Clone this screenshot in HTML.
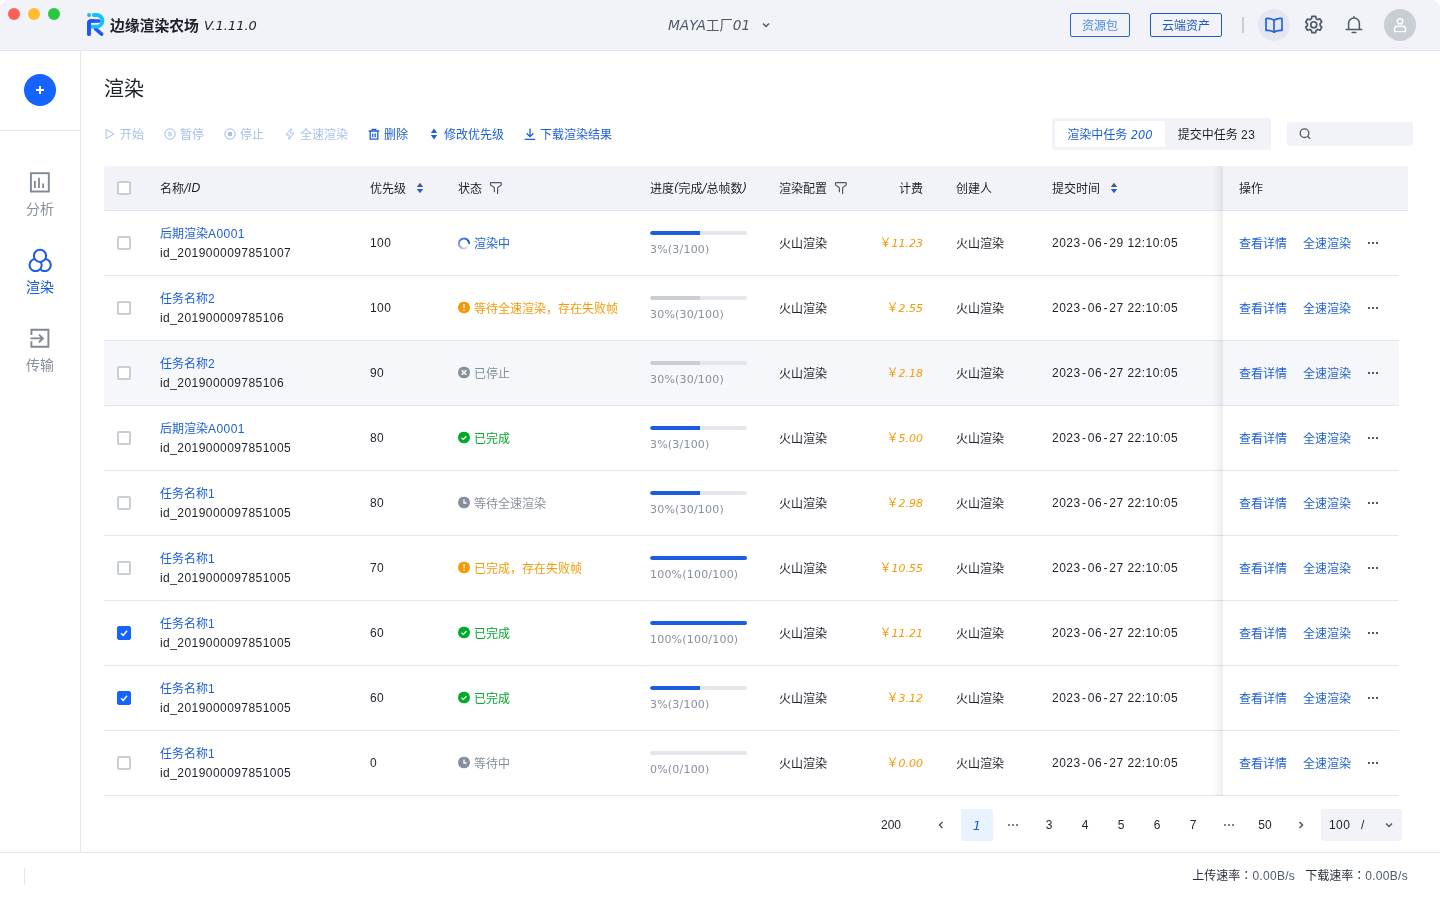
<!DOCTYPE html>
<html lang="zh-CN">
<head>
<meta charset="utf-8">
<title>边缘渲染农场</title>
<style>
*{box-sizing:border-box;margin:0;padding:0}
html,body{width:1440px;height:900px;overflow:hidden;background:#fff}
body{font-family:"Liberation Sans","Noto Sans CJK SC",sans-serif;font-size:12px;color:#1d2129;position:relative;-webkit-font-smoothing:antialiased}
.abs{position:absolute}
i,.it{font-family:"DejaVu Sans","Noto Sans CJK SC",sans-serif;font-style:italic}
svg{display:block}
/* window */
#win{will-change:transform;position:absolute;left:0;top:0;width:1440px;height:900px;border-radius:8px 8px 0 0;overflow:hidden;background:#fff}
/* header */
#hd{position:absolute;left:0;top:0;width:1440px;height:51px;background:#f2f3f8;border-bottom:1px solid #e5e6eb}
.tl{position:absolute;top:8px;width:12px;height:12px;border-radius:50%}
#logo{position:absolute;left:80px;top:5px}
#brand{position:absolute;left:110px;top:15px;height:22px;line-height:22px;font-size:14.800px;font-weight:700;color:#1d2129;white-space:nowrap}
#ver{position:absolute;left:204px;top:15px;height:22px;line-height:22px;font-size:13px;color:#1d2129;white-space:nowrap}
#proj{position:absolute;left:668px;top:14px;height:22px;line-height:22px;font-size:13px;color:#4e5969;white-space:nowrap}
.hbtn{position:absolute;top:13px;height:24px;line-height:24px;border:1px solid #2a66c8;border-radius:2px;text-align:center;font-size:12px}
/* sidebar */
#sb{position:absolute;left:0;top:51px;width:81px;height:801px;border-right:1px solid #e5e6eb;background:#fff}
#add{position:absolute;left:24px;top:23px;width:32px;height:32px;border-radius:50%;background:#1664ff}
#add:before{content:"";position:absolute;left:11.800px;top:14.800px;width:8.400px;height:2.400px;background:#fff}
#add:after{content:"";position:absolute;left:14.800px;top:11.800px;width:2.400px;height:8.400px;background:#fff}
#sbline{position:absolute;left:0;top:79px;width:80px;height:1px;background:#e5e6eb}
.nav{position:absolute;left:0;width:80px;text-align:center;font-size:14px;color:#86909c;line-height:20px}
.nav svg{margin:0 auto 5px}
.nav.on{color:#1b5be0}
/* footer */
#ft{position:absolute;left:0;top:852px;width:1440px;height:48px;border-top:1px solid #e5e6eb;background:#fff}
#ft .dv{position:absolute;left:24px;top:15px;width:1px;height:17px;background:#e5e6eb}
#ft .sp{position:absolute;right:32px;top:12px;line-height:20px;font-size:12px;color:#272e3b;white-space:nowrap}
/* content */
#title{position:absolute;left:104px;top:75px;font-size:20px;line-height:28px;color:#1d2129;font-weight:400}
.tb{position:absolute;top:125px;height:20px;line-height:20px;font-size:12px;color:#1d5fd6;white-space:nowrap;display:flex;align-items:center}
.tb svg{margin-right:4px;position:relative;top:-1px}
.tb.dis{opacity:.4}

.dj{font-family:"DejaVu Sans","Noto Sans CJK SC",sans-serif}
.cb{position:absolute;width:14px;height:14px;border:2px solid #c9cdd4;border-radius:2px;background:#fff}
.cb.on{background:#1664ff;border-color:#1664ff;border-width:1px}
.cb.on svg{left:2px!important;top:2px!important}
.th{position:absolute;top:165px;height:44px;display:flex;align-items:center;font-size:12px;color:#1d2129;white-space:nowrap}
.row{position:absolute;left:104px;width:1295px;height:65px;border-bottom:1px solid #e5e6eb}
.c{position:absolute;white-space:nowrap;line-height:20px;font-size:12px;color:#1d2129}
.c.m{top:22px;transform:translateY(.5px)}
.c.m.l,.c.m.dt,.c.m.fee{transform:none}
.c.nm{color:#1d5fd6}
.c.st{display:flex;align-items:center}
.c.st svg{margin-right:4px;position:relative;top:-1px}
.c.pt{font-family:"DejaVu Sans",sans-serif;color:#86909c;font-size:11px;letter-spacing:.2px}
.c.fee{text-align:right;color:#f59a07}
.pg{position:absolute;width:97px;height:4px;border-radius:2px;background:#e5e6eb;overflow:hidden}
.pg div{height:4px;border-radius:2px 0 0 2px}
.frow{position:absolute;left:1223px;width:176px;height:65px;border-bottom:1px solid #e5e6eb;color:#1d5fd6;font-size:12px;line-height:20px}
.frow span{position:absolute;transform:translateY(.5px);top:22px;white-space:nowrap}
.frow b{position:absolute;left:145px;top:31px;width:2px;height:2px;border-radius:50%;background:#1d2129;box-shadow:4px 0 0 #1d2129,8px 0 0 #1d2129}
.pi{position:absolute;top:809px;width:32px;height:32px;padding-bottom:1px;display:flex;align-items:center;justify-content:center;font-size:12px;color:#1d2129;border-radius:2px;white-space:nowrap}
.pi.on{background:#e8f3ff;color:#1d5fd6}
#win .th i{position:relative;top:1px;font-size:11.700px}

#win i{font-size:11px}
#hd i,#hd .it{font-size:13px}
.l{letter-spacing:.45px}
.dt{letter-spacing:.5px}
.dt s{text-decoration:none;margin:0 1.300px}
.c.id{letter-spacing:.44px}
.cj{font-family:"Noto Sans CJK JP",sans-serif}
.pi svg{position:relative;top:.500px}
#win .pi i{font-size:13px;position:relative;top:1px}
#ft .l{letter-spacing:.3px;color:#4e5969}
#win .tabi{font-size:11.500px}
#proj{font-size:13.400px}
#hd #proj i{font-size:13.750px}
</style>
</head>
<body>
<div id="win">
<!-- HEADER -->
<div id="hd">
  <div class="tl" style="left:8px;background:#fe5f57"></div>
  <div class="tl" style="left:28px;background:#febc2e"></div>
  <div class="tl" style="left:48px;background:#28c840"></div>
  <svg id="logo" width="40" height="40" viewBox="0 0 40 40"><circle cx="9.100" cy="10" r="2" fill="#1fb2f5"/><path d="M15.300 23.700L21.700 29.200" fill="none" stroke="#1f57f6" stroke-width="3.600" stroke-linecap="round"/><path d="M9 29.100V18a2 2 0 0 1 2-2h8" fill="none" stroke="#1f57f6" stroke-width="3.700" stroke-linecap="round"/><path d="M13.800 10H16.600a5.800 5.800 0 0 1 0 11.600H11" fill="none" stroke="#14c0f6" stroke-width="3.800" stroke-linecap="round"/><path d="M9 29.100V18a2 2 0 0 1 2-2h2" fill="none" stroke="#1f57f6" stroke-width="3.700" stroke-linecap="round"/></svg>
  <div id="brand">边缘渲染农场</div>
  <div id="ver" class="it">V.1.11.0</div>
  <div id="proj"><i>MAYA</i>工厂<i>01</i></div>
  <svg class="abs" style="left:761px;top:19.500px" width="10" height="10" viewBox="0 0 10 10"><path d="M2 3.500l3 3 3-3" fill="none" stroke="#4e5969" stroke-width="1.500"/></svg>
  <div class="hbtn" style="left:1070px;width:60px;color:#4d8be8">资源包</div>
  <div class="hbtn" style="left:1150px;width:72px;color:#1d5bbf;border-color:#1d5bbf">云端资产</div>
  <div class="abs" style="left:1242px;top:17px;width:2px;height:16px;background:#c9cdd4"></div>
  <div class="abs" style="left:1258px;top:9px;width:32px;height:32px;border-radius:50%;background:#e4e7ef"></div>
  <svg class="abs" style="left:1263px;top:14px" width="22" height="22" viewBox="0 0 22 22"><path d="M11 6.200C9 4.800 6 4.300 3 4.500v12c3-.2 6 .3 8 1.700 2-1.400 5-1.900 8-1.700v-12c-3-.2-6 .3-8 1.700zM11 6.200v12" fill="none" stroke="#2266d8" stroke-width="1.700" stroke-linejoin="round"/></svg>
  <svg class="abs" style="left:1303px;top:14px" width="21.500" height="21.500" viewBox="0 0 20 20"><circle cx="10" cy="10" r="2.800" fill="none" stroke="#4e5969" stroke-width="1.600"/><path d="M8.300 2.200h3.400l.5 2.100 1.500.9 2.100-.7 1.700 2.900-1.600 1.500v1.800l1.600 1.500-1.700 2.900-2.100-.7-1.500.9-.5 2.100H8.300l-.5-2.100-1.500-.9-2.100.7-1.700-2.900 1.600-1.500V9.100L2.500 7.600l1.700-2.900 2.100.7 1.500-.9z" fill="none" stroke="#4e5969" stroke-width="1.600" stroke-linejoin="round"/></svg>
  <svg class="abs" style="left:1344px;top:15px" width="20" height="20" viewBox="0 0 20 20"><path d="M4.600 14.400V8.300a5.400 5.400 0 0 1 10.800 0v6.100M2.200 14.400h15.600M8.200 17.500h3.600M10 1.800v1.200" fill="none" stroke="#4e5969" stroke-width="1.500" stroke-linecap="round"/></svg>
  <div class="abs" style="left:1384px;top:9px;width:32px;height:32px;border-radius:50%;background:#c9cdd4"></div>
  <svg class="abs" style="left:1392px;top:17px" width="16" height="16" viewBox="0 0 16 16"><circle cx="8" cy="4.300" r="2.700" fill="none" stroke="#fff" stroke-width="1.400"/><path d="M2.500 14.600v-2.300a3 3 0 0 1 3-3h5a3 3 0 0 1 3 3v2.300z" fill="none" stroke="#fff" stroke-width="1.400" stroke-linejoin="round"/></svg>
</div>
<!-- SIDEBAR -->
<div id="sb">
  <div id="add"></div>
  <div id="sbline"></div>
  <div class="nav" style="top:119px"><svg width="24" height="24" viewBox="0 0 24 24"><rect x="2.900" y="3.200" width="17.900" height="18.300" fill="none" stroke="#7f8894" stroke-width="1.900"/><path d="M6.900 18V10.700M11 18V7.800M15.100 18V13.600" stroke="#7f8894" stroke-width="1.800"/></svg>分析</div>
  <div class="nav on" style="top:197px"><svg width="24" height="24" viewBox="0 0 24 24"><g fill="#fff" stroke="#1b5be0" stroke-width="2"><circle cx="16.700" cy="17.100" r="6.100"/><circle cx="7.600" cy="17.100" r="6.100"/><circle cx="12" cy="7.800" r="6.100"/></g></svg>渲染</div>
  <div class="nav" style="top:275px"><svg width="24" height="24" viewBox="0 0 24 24"><path d="M3.400 9.100V3.800H20.400V20.800H3.400V15.300M2.400 12.400H14.500M10.900 8.600L14.900 12.400L10.900 16.200" fill="none" stroke="#7f8894" stroke-width="1.900"/></svg>传输</div>
</div>
<!-- FOOTER -->
<div id="ft"><div class="dv"></div><div class="sp">上传速率<span class="cj" lang="ja">：</span><span class="l">0.00B/s</span><span style="margin-left:10px"></span>下载速率<span class="cj" lang="ja">：</span><span class="l">0.00B/s</span></div></div>
<!-- CONTENT -->
<div id="title">渲染</div>
<!--TOOLBAR-->
<div class="tb dis" style="left:104px"><svg width="12" height="12" viewBox="0 0 12 12"><path d="M2 1.500v9l8-4.500z" fill="none" stroke="#1d5fd6" stroke-width="1"/></svg>开始</div><div class="tb dis" style="left:164px"><svg width="12" height="12" viewBox="0 0 12 12"><circle cx="6" cy="6" r="5.200" fill="none" stroke="#1d5fd6"/><path d="M4.100 3.600h3.800v4.800H4.100z" fill="#1d5fd6" opacity=".55"/></svg>暂停</div><div class="tb dis" style="left:224px"><svg width="12" height="12" viewBox="0 0 12 12"><circle cx="6" cy="6" r="5.200" fill="none" stroke="#1d5fd6"/><rect x="4" y="4" width="4" height="4" rx=".800" fill="#1d5fd6"/></svg>停止</div><div class="tb dis" style="left:284px"><svg width="12" height="12" viewBox="0 0 12 12"><path d="M7.200 .500L2 6.900h3.300L4.800 11.500l5.200-6.400H6.700z" fill="none" stroke="#1d5fd6" stroke-width="1" stroke-linejoin="round"/></svg>全速渲染</div><div class="tb" style="left:368px"><svg width="12" height="12" viewBox="0 0 12 12"><path d="M.700 3h10.600M4.200 2.700V1.300h3.600v1.400M2.200 3.300v7.900h7.600V3.300M4.800 5.400v3.800M7.200 5.400v3.800" fill="none" stroke="#1d5fd6" stroke-width="1.300"/></svg>删除</div><div class="tb" style="left:428px"><svg width="12" height="12" viewBox="0 0 12 12"><path d="M6 .600L9.200 5H2.800zM6 11.400L9.200 7H2.800z" fill="#1d5fd6"/></svg>修改优先级</div><div class="tb" style="left:524px"><svg width="12" height="12" viewBox="0 0 12 12"><path d="M6 .600v7.800M2.600 5.200L6 8.600l3.400-3.400M.800 11.300h10.400" fill="none" stroke="#1d5fd6" stroke-width="1.300"/></svg>下载渲染结果</div>
<!--/TOOLBAR-->
<!--TABS-->
<div class="abs" style="left:1052px;top:118px;width:219px;height:32px;background:#f2f3f8;border-radius:2px"></div>
<div class="abs" style="left:1055px;top:121px;width:110px;height:26px;background:#fff;border-radius:2px;line-height:28px;text-align:center;color:#1d5fd6;white-space:nowrap">渲染中任务 <i class="tabi">200</i></div>
<div class="abs" style="left:1165px;top:121px;width:103px;height:26px;line-height:28px;text-align:center;color:#1d2129;white-space:nowrap">提交中任务 <span class="l">23</span></div>
<div class="abs" style="left:1287px;top:122px;width:126px;height:24px;background:#f2f3f8;border-radius:2px"></div>
<svg class="abs" style="left:1298px;top:127px" width="14" height="14" viewBox="0 0 14 14"><circle cx="6.500" cy="6.200" r="4.300" fill="none" stroke="#4e5969" stroke-width="1.300"/><path d="M9.600 9.300l2.600 2.600" stroke="#4e5969" stroke-width="1.300"/></svg>
<!--/TABS-->
<!--TABLE-->
<div class="abs" style="left:104px;top:166px;width:1304px;height:45px;background:#f2f3f8;border-bottom:1px solid #e5e6eb"></div>
<div class="cb" style="left:117px;top:181px"></div>
<div class="th" style="left:160px">名称<i>/ID</i></div>
<div class="th" style="left:370px">优先级<svg width="8" height="12" viewBox="0 0 8 12" style="margin-left:10px;position:relative;top:1px"><path d="M4 .800L7.200 5H.800z" fill="#4e5969"/><path d="M4 11.200L7.200 7H.800z" fill="#1d5fd6"/></svg></div>
<div class="th" style="left:458px">状态<svg width="14" height="14" viewBox="0 0 14 14" style="margin-left:7px;position:relative;top:1px"><path d="M8.600 12.600V7.300Q8.600 6.500 9.400 6L11.600 4.600Q12.300 4.100 12.300 3.200V2.500Q12.300 1.700 11.500 1.700H2.300Q1.500 1.700 1.500 2.500V3.200Q1.500 4.100 2.200 4.600L4.600 6Q5.400 6.500 5.400 7.300V10.700" fill="none" stroke="#4e5969" stroke-width="1.200" stroke-linecap="round"/></svg></div>
<div class="th" style="left:650px">进度<i>(</i>完成<i>/</i>总帧数<i>)</i></div>
<div class="th" style="left:779px">渲染配置<svg width="14" height="14" viewBox="0 0 14 14" style="margin-left:7px;position:relative;top:1px"><path d="M8.600 12.600V7.300Q8.600 6.500 9.400 6L11.600 4.600Q12.300 4.100 12.300 3.200V2.500Q12.300 1.700 11.500 1.700H2.300Q1.500 1.700 1.500 2.500V3.200Q1.500 4.100 2.200 4.600L4.600 6Q5.400 6.500 5.400 7.300V10.700" fill="none" stroke="#4e5969" stroke-width="1.200" stroke-linecap="round"/></svg></div>
<div class="th" style="left:860px;width:63px;justify-content:flex-end">计费</div>
<div class="th" style="left:956px">创建人</div>
<div class="th" style="left:1052px">提交时间<svg width="8" height="12" viewBox="0 0 8 12" style="margin-left:10px;position:relative;top:1px"><path d="M4 .800L7.200 5H.800z" fill="#4e5969"/><path d="M4 11.200L7.200 7H.800z" fill="#1d5fd6"/></svg></div>
<div class="row" style="top:211px;background:transparent">
<div class="cb" style="left:13px;top:25px"></div>
<div class="c nm" style="left:56px;top:12px;transform:translateY(.7px)">后期渲染<span class="l">A0001</span></div><div class="c id" style="left:56px;top:32px;transform:translateY(.4px)">id_2019000097851007</div>
<div class="c m l" style="left:266px">100</div>
<div class="c m st" style="left:354px;color:#1d5fd6"><svg width="12" height="12" viewBox="0 0 12 12" style="position:relative;top:-.5px"><g fill="none" stroke="#1450d0" stroke-width="1.900"><path d="M11.05 6.18A5.05 5.05 0 0 0 10.62 3.95" stroke-opacity="1.00"/><path d="M10.67 4.07A5.05 5.05 0 0 0 9.39 2.26" stroke-opacity="0.97"/><path d="M9.49 2.35A5.05 5.05 0 0 0 7.58 1.20" stroke-opacity="0.93"/><path d="M7.70 1.25A5.05 5.05 0 0 0 5.50 0.98" stroke-opacity="0.89"/><path d="M5.63 0.96A5.05 5.05 0 0 0 3.50 1.61" stroke-opacity="0.83"/><path d="M3.62 1.55A5.05 5.05 0 0 0 1.94 3.00" stroke-opacity="0.77"/><path d="M2.02 2.90A5.05 5.05 0 0 0 1.07 4.91" stroke-opacity="0.70"/><path d="M1.10 4.78A5.05 5.05 0 0 0 1.05 7.00" stroke-opacity="0.62"/><path d="M1.03 6.87A5.05 5.05 0 0 0 1.88 8.92" stroke-opacity="0.54"/><path d="M1.81 8.81A5.05 5.05 0 0 0 3.42 10.34" stroke-opacity="0.46"/><path d="M3.31 10.27A5.05 5.05 0 0 0 5.40 11.01" stroke-opacity="0.37"/><path d="M5.27 11.00A5.05 5.05 0 0 0 7.49 10.83" stroke-opacity="0.27"/><path d="M7.36 10.86A5.05 5.05 0 0 0 9.32 9.81" stroke-opacity="0.18"/><path d="M9.22 9.89A5.05 5.05 0 0 0 10.58 8.13" stroke-opacity="0.07"/></g></svg>渲染中</div>
<div class="pg" style="left:546px;top:20px"><div style="width:50px;background:#1c5de2"></div></div><div class="c pt" style="left:546px;top:29px">3%(3/100)</div>
<div class="c m" style="left:675px">火山渲染</div>
<div class="c m fee" style="left:739px;width:80px">￥<i>11.23</i></div>
<div class="c m" style="left:852px">火山渲染</div>
<div class="c m dt" style="left:948px">2023<s>-</s>06<s>-</s>29 12:10:05</div>
</div>
<div class="row" style="top:276px;background:transparent">
<div class="cb" style="left:13px;top:25px"></div>
<div class="c nm" style="left:56px;top:12px;transform:translateY(.7px)">任务名称<span class="l">2</span></div><div class="c id" style="left:56px;top:32px;transform:translateY(.4px)">id_201900009785106</div>
<div class="c m l" style="left:266px">100</div>
<div class="c m st" style="left:354px;color:#f59a07"><svg width="12" height="12" viewBox="0 0 12 12"><circle cx="6" cy="6" r="6" fill="#f59a07"/><path d="M6 2.800v3.900" stroke="#fff" stroke-width="1.400"/><circle cx="6" cy="8.800" r=".8" fill="#fff"/></svg>等待全速渲染，存在失败帧</div>
<div class="pg" style="left:546px;top:20px"><div style="width:50px;background:#c9cdd4"></div></div><div class="c pt" style="left:546px;top:29px">30%(30/100)</div>
<div class="c m" style="left:675px">火山渲染</div>
<div class="c m fee" style="left:739px;width:80px">￥<i>2.55</i></div>
<div class="c m" style="left:852px">火山渲染</div>
<div class="c m dt" style="left:948px">2023<s>-</s>06<s>-</s>27 22:10:05</div>
</div>
<div class="row" style="top:341px;background:#f6f7fa">
<div class="cb" style="left:13px;top:25px"></div>
<div class="c nm" style="left:56px;top:12px;transform:translateY(.7px)">任务名称<span class="l">2</span></div><div class="c id" style="left:56px;top:32px;transform:translateY(.4px)">id_201900009785106</div>
<div class="c m l" style="left:266px">90</div>
<div class="c m st" style="left:354px;color:#86909c"><svg width="12" height="12" viewBox="0 0 12 12"><circle cx="6" cy="6" r="6" fill="#86909c"/><path d="M3.700 3.700l4.600 4.600M8.300 3.700L3.700 8.300" stroke="#fff" stroke-width="1.500"/></svg>已停止</div>
<div class="pg" style="left:546px;top:20px"><div style="width:50px;background:#c9cdd4"></div></div><div class="c pt" style="left:546px;top:29px">30%(30/100)</div>
<div class="c m" style="left:675px">火山渲染</div>
<div class="c m fee" style="left:739px;width:80px">￥<i>2.18</i></div>
<div class="c m" style="left:852px">火山渲染</div>
<div class="c m dt" style="left:948px">2023<s>-</s>06<s>-</s>27 22:10:05</div>
</div>
<div class="row" style="top:406px;background:transparent">
<div class="cb" style="left:13px;top:25px"></div>
<div class="c nm" style="left:56px;top:12px;transform:translateY(.7px)">后期渲染<span class="l">A0001</span></div><div class="c id" style="left:56px;top:32px;transform:translateY(.4px)">id_2019000097851005</div>
<div class="c m l" style="left:266px">80</div>
<div class="c m st" style="left:354px;color:#00aa2a"><svg width="12" height="12" viewBox="0 0 12 12"><circle cx="6" cy="6" r="6" fill="#00aa2a"/><path d="M3.600 6.200l1.700 1.700 3.100-3.200" fill="none" stroke="#fff" stroke-width="1.300"/></svg>已完成</div>
<div class="pg" style="left:546px;top:20px"><div style="width:50px;background:#1c5de2"></div></div><div class="c pt" style="left:546px;top:29px">3%(3/100)</div>
<div class="c m" style="left:675px">火山渲染</div>
<div class="c m fee" style="left:739px;width:80px">￥<i>5.00</i></div>
<div class="c m" style="left:852px">火山渲染</div>
<div class="c m dt" style="left:948px">2023<s>-</s>06<s>-</s>27 22:10:05</div>
</div>
<div class="row" style="top:471px;background:transparent">
<div class="cb" style="left:13px;top:25px"></div>
<div class="c nm" style="left:56px;top:12px;transform:translateY(.7px)">任务名称<span class="l">1</span></div><div class="c id" style="left:56px;top:32px;transform:translateY(.4px)">id_2019000097851005</div>
<div class="c m l" style="left:266px">80</div>
<div class="c m st" style="left:354px;color:#86909c"><svg width="12" height="12" viewBox="0 0 12 12"><circle cx="6" cy="6" r="6" fill="#86909c"/><path d="M6 3v3.500h2.500" fill="none" stroke="#fff" stroke-width="1.300"/></svg>等待全速渲染</div>
<div class="pg" style="left:546px;top:20px"><div style="width:50px;background:#1c5de2"></div></div><div class="c pt" style="left:546px;top:29px">30%(30/100)</div>
<div class="c m" style="left:675px">火山渲染</div>
<div class="c m fee" style="left:739px;width:80px">￥<i>2.98</i></div>
<div class="c m" style="left:852px">火山渲染</div>
<div class="c m dt" style="left:948px">2023<s>-</s>06<s>-</s>27 22:10:05</div>
</div>
<div class="row" style="top:536px;background:transparent">
<div class="cb" style="left:13px;top:25px"></div>
<div class="c nm" style="left:56px;top:12px;transform:translateY(.7px)">任务名称<span class="l">1</span></div><div class="c id" style="left:56px;top:32px;transform:translateY(.4px)">id_2019000097851005</div>
<div class="c m l" style="left:266px">70</div>
<div class="c m st" style="left:354px;color:#f59a07"><svg width="12" height="12" viewBox="0 0 12 12"><circle cx="6" cy="6" r="6" fill="#f59a07"/><path d="M6 2.800v3.900" stroke="#fff" stroke-width="1.400"/><circle cx="6" cy="8.800" r=".8" fill="#fff"/></svg>已完成，存在失败帧</div>
<div class="pg" style="left:546px;top:20px"><div style="width:97.0px;background:#1c5de2"></div></div><div class="c pt" style="left:546px;top:29px">100%(100/100)</div>
<div class="c m" style="left:675px">火山渲染</div>
<div class="c m fee" style="left:739px;width:80px">￥<i>10.55</i></div>
<div class="c m" style="left:852px">火山渲染</div>
<div class="c m dt" style="left:948px">2023<s>-</s>06<s>-</s>27 22:10:05</div>
</div>
<div class="row" style="top:601px;background:transparent">
<div class="cb on" style="left:13px;top:25px"><svg width="8" height="8" viewBox="0 0 8 8" style="position:absolute;left:2px;top:2px"><path d="M1 4.200l2.200 2.200L7 1.800" fill="none" stroke="#fff" stroke-width="1.500"/></svg></div>
<div class="c nm" style="left:56px;top:12px;transform:translateY(.7px)">任务名称<span class="l">1</span></div><div class="c id" style="left:56px;top:32px;transform:translateY(.4px)">id_2019000097851005</div>
<div class="c m l" style="left:266px">60</div>
<div class="c m st" style="left:354px;color:#00aa2a"><svg width="12" height="12" viewBox="0 0 12 12"><circle cx="6" cy="6" r="6" fill="#00aa2a"/><path d="M3.600 6.200l1.700 1.700 3.100-3.200" fill="none" stroke="#fff" stroke-width="1.300"/></svg>已完成</div>
<div class="pg" style="left:546px;top:20px"><div style="width:97.0px;background:#1c5de2"></div></div><div class="c pt" style="left:546px;top:29px">100%(100/100)</div>
<div class="c m" style="left:675px">火山渲染</div>
<div class="c m fee" style="left:739px;width:80px">￥<i>11.21</i></div>
<div class="c m" style="left:852px">火山渲染</div>
<div class="c m dt" style="left:948px">2023<s>-</s>06<s>-</s>27 22:10:05</div>
</div>
<div class="row" style="top:666px;background:transparent">
<div class="cb on" style="left:13px;top:25px"><svg width="8" height="8" viewBox="0 0 8 8" style="position:absolute;left:2px;top:2px"><path d="M1 4.200l2.200 2.200L7 1.800" fill="none" stroke="#fff" stroke-width="1.500"/></svg></div>
<div class="c nm" style="left:56px;top:12px;transform:translateY(.7px)">任务名称<span class="l">1</span></div><div class="c id" style="left:56px;top:32px;transform:translateY(.4px)">id_2019000097851005</div>
<div class="c m l" style="left:266px">60</div>
<div class="c m st" style="left:354px;color:#00aa2a"><svg width="12" height="12" viewBox="0 0 12 12"><circle cx="6" cy="6" r="6" fill="#00aa2a"/><path d="M3.600 6.200l1.700 1.700 3.100-3.200" fill="none" stroke="#fff" stroke-width="1.300"/></svg>已完成</div>
<div class="pg" style="left:546px;top:20px"><div style="width:50px;background:#1c5de2"></div></div><div class="c pt" style="left:546px;top:29px">3%(3/100)</div>
<div class="c m" style="left:675px">火山渲染</div>
<div class="c m fee" style="left:739px;width:80px">￥<i>3.12</i></div>
<div class="c m" style="left:852px">火山渲染</div>
<div class="c m dt" style="left:948px">2023<s>-</s>06<s>-</s>27 22:10:05</div>
</div>
<div class="row" style="top:731px;background:transparent">
<div class="cb" style="left:13px;top:25px"></div>
<div class="c nm" style="left:56px;top:12px;transform:translateY(.7px)">任务名称<span class="l">1</span></div><div class="c id" style="left:56px;top:32px;transform:translateY(.4px)">id_2019000097851005</div>
<div class="c m l" style="left:266px">0</div>
<div class="c m st" style="left:354px;color:#86909c"><svg width="12" height="12" viewBox="0 0 12 12"><circle cx="6" cy="6" r="6" fill="#86909c"/><path d="M6 3v3.500h2.500" fill="none" stroke="#fff" stroke-width="1.300"/></svg>等待中</div>
<div class="pg" style="left:546px;top:20px"><div style="width:0px;background:#1c5de2"></div></div><div class="c pt" style="left:546px;top:29px">0%(0/100)</div>
<div class="c m" style="left:675px">火山渲染</div>
<div class="c m fee" style="left:739px;width:80px">￥<i>0.00</i></div>
<div class="c m" style="left:852px">火山渲染</div>
<div class="c m dt" style="left:948px">2023<s>-</s>06<s>-</s>27 22:10:05</div>
</div>
<div class="abs" style="left:1211px;top:166px;width:12px;height:630px;background:linear-gradient(to right,rgba(0,0,0,0),rgba(0,0,0,.015) 35%,rgba(0,0,0,.065))"></div>
<div class="abs" style="left:1223px;top:166px;width:185px;height:630px;background:#fff"></div>
<div class="abs" style="left:1223px;top:166px;width:185px;height:45px;background:#f2f3f8;border-bottom:1px solid #e5e6eb"></div>
<div class="th" style="left:1239px">操作</div>
<div class="frow" style="top:211px;background:#fff"><span style="left:16px">查看详情</span><span style="left:80px">全速渲染</span><b></b></div>
<div class="frow" style="top:276px;background:#fff"><span style="left:16px">查看详情</span><span style="left:80px">全速渲染</span><b></b></div>
<div class="frow" style="top:341px;background:#f6f7fa"><span style="left:16px">查看详情</span><span style="left:80px">全速渲染</span><b></b></div>
<div class="frow" style="top:406px;background:#fff"><span style="left:16px">查看详情</span><span style="left:80px">全速渲染</span><b></b></div>
<div class="frow" style="top:471px;background:#fff"><span style="left:16px">查看详情</span><span style="left:80px">全速渲染</span><b></b></div>
<div class="frow" style="top:536px;background:#fff"><span style="left:16px">查看详情</span><span style="left:80px">全速渲染</span><b></b></div>
<div class="frow" style="top:601px;background:#fff"><span style="left:16px">查看详情</span><span style="left:80px">全速渲染</span><b></b></div>
<div class="frow" style="top:666px;background:#fff"><span style="left:16px">查看详情</span><span style="left:80px">全速渲染</span><b></b></div>
<div class="frow" style="top:731px;background:#fff"><span style="left:16px">查看详情</span><span style="left:80px">全速渲染</span><b></b></div>
<!--/TABLE-->
<!--PAGER-->
<div class="pi" style="left:870px;width:42px">200</div>
<div class="pi" style="left:925px"><svg width="10" height="10" viewBox="0 0 10 10"><path d="M6.500 2L3.500 5l3 3" fill="none" stroke="#4e5969" stroke-width="1.500"/></svg></div>
<div class="pi on" style="left:961px"><i>1</i></div>
<div class="pi" style="left:997px"><svg width="12" height="4" viewBox="0 0 12 4"><circle cx="2" cy="2" r="1" fill="#4e5969"/><circle cx="6" cy="2" r="1" fill="#4e5969"/><circle cx="10" cy="2" r="1" fill="#4e5969"/></svg></div>
<div class="pi" style="left:1033px">3</div>
<div class="pi" style="left:1069px">4</div>
<div class="pi" style="left:1105px">5</div>
<div class="pi" style="left:1141px">6</div>
<div class="pi" style="left:1177px">7</div>
<div class="pi" style="left:1213px"><svg width="12" height="4" viewBox="0 0 12 4"><circle cx="2" cy="2" r="1" fill="#4e5969"/><circle cx="6" cy="2" r="1" fill="#4e5969"/><circle cx="10" cy="2" r="1" fill="#4e5969"/></svg></div>
<div class="pi" style="left:1249px">50</div>
<div class="pi" style="left:1285px"><svg width="10" height="10" viewBox="0 0 10 10"><path d="M3.500 2l3 3-3 3" fill="none" stroke="#4e5969" stroke-width="1.500"/></svg></div>
<div class="abs" style="left:1321px;top:809px;width:81px;height:32px;background:#f2f3f8;border-radius:2px"></div>
<div class="pi l" style="left:1329px;width:24px;justify-content:flex-start">100</div><div class="pi" style="left:1361px;width:6px;justify-content:flex-start">/</div>
<svg class="abs" style="left:1383.500px;top:820px" width="10" height="10" viewBox="0 0 10 10"><path d="M2 3.500l3 3 3-3" fill="none" stroke="#4e5969" stroke-width="1.500"/></svg>
<!--/PAGER-->
</div>
</body>
</html>
